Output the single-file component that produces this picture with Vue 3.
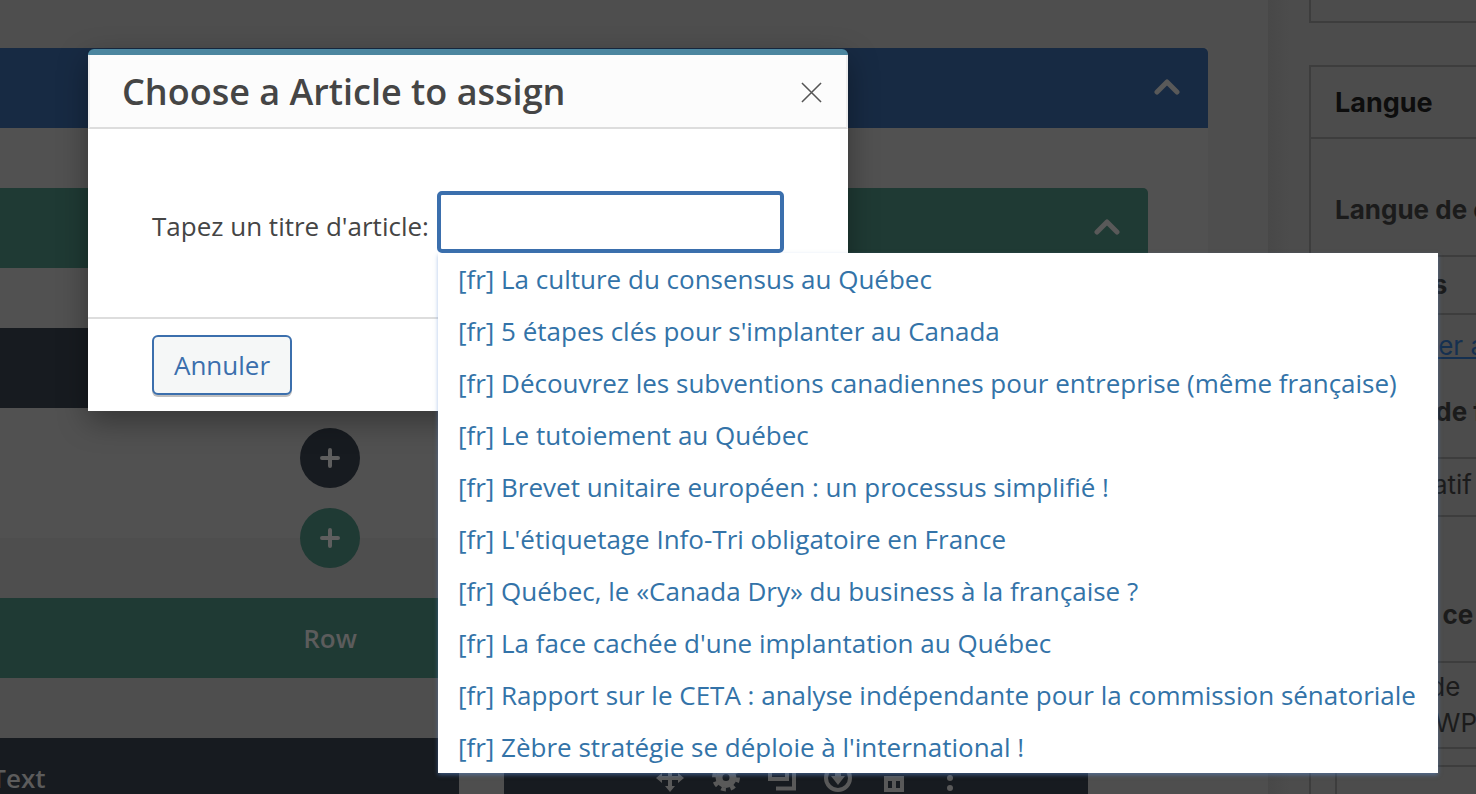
<template>
  <div class="screen">
    <div class="canvas">
      <div class="section-blue">
        <div class="bar blue">
          <svg class="chevron" viewBox="0 0 26 16"><path d="M3 13 L13 3 L23 13" /></svg>
        </div>
        <div class="bar green">
          <svg class="chevron" viewBox="0 0 26 16"><path d="M3 13 L13 3 L23 13" /></svg>
        </div>
        <div class="bar dark"></div>
        <div class="plus-col">
          <button class="round round-dark">
            <svg class="plus" viewBox="0 0 20 20"><path d="M10 2 V18 M2 10 H18" /></svg>
          </button>
          <button class="round round-green">
            <svg class="plus" viewBox="0 0 20 20"><path d="M10 2 V18 M2 10 H18" /></svg>
          </button>
        </div>
      </div>
      <div class="row-wrap">
        <div class="bar row-bar">Row</div>
        <div class="cols">
          <div class="col-left">Text</div>
          <div class="col-right">
            <span class="cell">
              <svg class="tool" viewBox="0 0 28 28"><path d="M14 0 L19 6 H16 V12 H22 V9 L28 14 L22 19 V16 H16 V22 H19 L14 28 L9 22 H12 V16 H6 V19 L0 14 L6 9 V12 H12 V6 H9 Z" /></svg>
            </span>
            <span class="cell">
              <svg class="tool tool-line" viewBox="0 0 28 28">
                <circle cx="14" cy="13.5" r="7" stroke-width="7" />
                <circle cx="14" cy="13.5" r="12" stroke-width="4" stroke-dasharray="4.8 4.62" />
              </svg>
            </span>
            <span class="cell">
              <svg class="tool tool-line" viewBox="0 0 28 28"><path d="M2 1 V15 H19 V1 M8 24.5 H26 V6" /></svg>
            </span>
            <span class="cell">
              <svg class="tool tool-line" viewBox="0 0 28 28">
                <circle cx="14" cy="14" r="12" />
                <path class="solid" d="M11 4 H17 V12 H21 L14 21 L7 12 H11 Z" />
              </svg>
            </span>
            <span class="cell">
              <svg class="tool" viewBox="0 0 28 28"><path fill-rule="evenodd" d="M4 12 H24 V28 H4 Z M8 17 V24 H12 V17 Z M16 17 V24 H20 V17 Z" /></svg>
            </span>
            <span class="cell">
              <svg class="tool" viewBox="0 0 28 28"><circle cx="14" cy="4" r="3" /><circle cx="14" cy="14" r="3" /><circle cx="14" cy="24" r="3" /></svg>
            </span>
          </div>
        </div>
      </div>
    </div>

    <aside class="sidebar">
      <div class="panel panel-top"></div>
      <div class="panel">
        <h2 class="panel-title">Langue</h2>
        <div class="field field-lang"><strong>Langue de contenu</strong></div>
        <div class="field field-s"><strong>Versions</strong></div>
        <div class="field field-f">
          <a>Supprimer après</a>
          <strong>Langue de format</strong>
        </div>
        <div class="field field-atif">Comparatif</div>
        <div class="field field-ce"><strong>Type de ce bloc</strong></div>
        <div class="field field-wp">Source de<br />Version WP</div>
        <div class="field field-end"></div>
        <div class="foot-inner"></div>
      </div>
    </aside>

    <div class="modal">
      <header class="modal-head">
        <h1>Choose a Article to assign</h1>
        <svg class="close" viewBox="0 0 22 22"><path d="M1 1 L21 21 M21 1 L1 21" /></svg>
      </header>
      <div class="modal-body">
        <label class="search-label">Tapez un titre d'article:</label>
        <div class="search-box">
          <input class="search-input" type="text" />
          <ul class="results">
            <li v-for="title in articles" :key="title">[fr] {{ title }}</li>
          </ul>
        </div>
      </div>
      <footer class="modal-foot">
        <button class="cancel">Annuler</button>
      </footer>
    </div>
  </div>
</template>

<script setup>
const articles = [
  "La culture du consensus au Québec",
  "5 étapes clés pour s'implanter au Canada",
  "Découvrez les subventions canadiennes pour entreprise (même française)",
  "Le tutoiement au Québec",
  "Brevet unitaire européen : un processus simplifié !",
  "L'étiquetage Info-Tri obligatoire en France",
  "Québec, le «Canada Dry» du business à la française ?",
  "La face cachée d'une implantation au Québec",
  "Rapport sur le CETA : analyse indépendante pour la commission sénatoriale",
  "Zèbre stratégie se déploie à l'international !",
];
</script>

<style>
html,
body {
  margin: 0;
  overflow: hidden;
}
</style>

<style scoped>
.screen {
  position: relative;
  display: flex;
  width: 1476px;
  height: 794px;
  overflow: hidden;
  background: #4e4e4e;
  font-family: "Open Sans", "Noto Sans", sans-serif;
}

.canvas {
  flex: none;
  width: 1268px;
  padding-top: 48px;
  box-sizing: border-box;
}

.section-blue {
  width: 1208px;
  height: 490px;
  background: #515151;
}

.bar {
  display: flex;
  align-items: center;
  justify-content: flex-end;
  height: 80px;
  box-sizing: border-box;
}

.blue {
  padding-right: 28px;
  background: #172a43;
  border-top-right-radius: 5px;
}

.green {
  width: 1148px;
  margin-top: 60px;
  padding-right: 28px;
  background: #1f3a34;
  border-top-right-radius: 5px;
}

.dark {
  width: 1088px;
  margin-top: 60px;
  background: #171b20;
}

.chevron {
  width: 26px;
  height: 16px;
  margin-bottom: 2px;
  fill: none;
  stroke: #595959;
  stroke-width: 5;
  stroke-linecap: round;
  stroke-linejoin: round;
}

.plus-col {
  display: flex;
  flex-direction: column;
  align-items: center;
  gap: 20px;
  width: 660px;
  padding-top: 20px;
}

.round {
  display: flex;
  align-items: center;
  justify-content: center;
  width: 60px;
  height: 60px;
  padding: 0;
  border: 0;
  border-radius: 50%;
}

.round-dark {
  background: #171b20;
}

.round-green {
  background: #1f3a34;
}

.plus {
  width: 20px;
  height: 20px;
  fill: none;
  stroke: #5e5e5e;
  stroke-width: 4;
  stroke-linecap: round;
}

.row-wrap {
  width: 1516px;
  margin-top: 60px;
  margin-left: -428px;
}

.row-bar {
  justify-content: center;
  color: #5c5c5c;
  background: #1f3a34;
  font-size: 26px;
  font-weight: 600;
}

.cols {
  display: flex;
  gap: 45px;
  height: 80px;
  margin-top: 60px;
}

.col-left {
  display: flex;
  align-items: center;
  justify-content: center;
  width: 887px;
  padding-left: 6px;
  box-sizing: border-box;
  color: #5c5c5c;
  background: #171b20;
  font-size: 26px;
  font-weight: 600;
}

.col-right {
  display: flex;
  align-items: center;
  width: 584px;
  padding-left: 138px;
  box-sizing: border-box;
  background: #171b20;
}

.cell {
  display: flex;
  flex: none;
  justify-content: center;
  width: 56px;
}

.tool {
  display: block;
  overflow: visible;
  width: 28px;
  height: 28px;
  fill: #595959;
}

.tool-line {
  fill: none;
  stroke: #595959;
  stroke-width: 4;
}

.tool-line .solid {
  fill: #595959;
  stroke: none;
}

.sidebar {
  flex: 1;
  padding-left: 41px;
  background: linear-gradient(90deg, #484848 0, #4c4c4c 22px, #4c4c4c 100%);
  color: #0d0d0d;
  font-family: Inter, "Liberation Sans", sans-serif;
  font-size: 26px;
  white-space: nowrap;
}

.panel {
  width: 400px;
  box-sizing: border-box;
  border-top: 2px solid #3d3d3d;
  border-left: 2px solid #3d3d3d;
}

.panel-top {
  height: 23px;
  margin-bottom: 42px;
  border-top: 0;
  border-bottom: 2px solid #3d3d3d;
}

.panel-title {
  display: flex;
  align-items: center;
  height: 72px;
  margin: 0;
  padding-left: 24px;
  box-sizing: border-box;
  border-bottom: 2px solid #3d3d3d;
  font-size: 27px;
  font-weight: 700;
}

.field {
  padding-left: 24px;
  box-sizing: border-box;
  color: #1b1b1b;
  line-height: 36px;
  border-bottom: 2px solid #3d3d3d;
}

.field strong {
  display: block;
  font-weight: 700;
}

.field a {
  display: block;
  margin-bottom: 30px;
  color: #153050;
  text-decoration: underline;
}

.field-lang {
  height: 118px;
  padding-top: 53px;
}

.field-s {
  height: 58px;
  padding-top: 10px;
}

.field-f {
  height: 144px;
  padding-top: 13px;
}

.field-atif {
  height: 58px;
  padding-top: 8px;
}

.field-ce {
  height: 146px;
  padding-top: 80px;
}

.field-wp {
  height: 86px;
  padding-top: 6px;
}

.field-end {
  height: 18px;
}

.foot-inner {
  height: 40px;
  margin-left: 24px;
  border-left: 2px solid #3d3d3d;
}

.modal {
  position: absolute;
  top: 49px;
  left: 88px;
  width: 760px;
  height: 362px;
  box-sizing: border-box;
  border-top: 6px solid #4c869f;
  border-radius: 6px 6px 0 0;
  background: #fff;
  box-shadow: 0 10px 30px rgba(0, 0, 0, 0.35);
  color: #454545;
}

.modal-head {
  display: flex;
  align-items: center;
  justify-content: space-between;
  height: 74px;
  padding: 2px 24px 0 32px;
  box-sizing: border-box;
  border-right: 2px solid #eee;
  border-bottom: 2px solid #ddd;
  border-left: 2px solid #eee;
  background: #fcfcfc;
}

.modal-head h1 {
  margin: 0;
  font-size: 36px;
  font-weight: 600;
  line-height: 1;
}

.close {
  width: 21px;
  height: 21px;
  fill: none;
  stroke: #555;
  stroke-width: 1.6;
}

.modal-body {
  display: flex;
  align-items: flex-start;
  gap: 8px;
  height: 190px;
  padding: 62px 0 0 64px;
  box-sizing: border-box;
  border-bottom: 2px solid #ddd;
}

.search-label {
  margin-top: 17px;
  font-size: 26px;
}

.search-box {
  position: relative;
}

.search-input {
  display: block;
  width: 347px;
  height: 62px;
  padding: 0;
  box-sizing: border-box;
  border: 4px solid #3b6fad;
  border-radius: 5px;
  outline: 0;
}

.results {
  position: absolute;
  top: 62px;
  left: 1px;
  width: 1000px;
  margin: 0;
  padding: 0;
  box-sizing: border-box;
  list-style: none;
  background: #fff;
  box-shadow: 0 2px 4px rgba(90, 140, 210, 0.5);
  color: #3373a8;
  font-size: 26px;
}

.results li {
  height: 52px;
  padding: 0 20px;
  line-height: 52px;
  white-space: nowrap;
}

.modal-foot {
  padding: 16px 0 0 64px;
}

.cancel {
  width: 140px;
  height: 60px;
  padding: 0;
  border: 2px solid #3b6fad;
  border-radius: 6px;
  background: #f5f7f7;
  box-shadow: 0 2px 0 rgba(0, 0, 0, 0.25);
  color: #3b6fad;
  font-family: "Open Sans", sans-serif;
  font-size: 26px;
}
</style>
